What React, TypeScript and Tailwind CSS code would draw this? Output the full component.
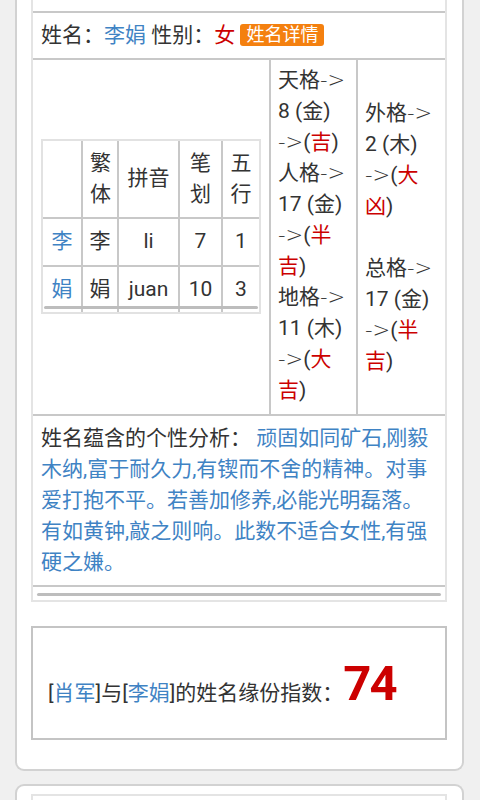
import React from "react";

const F = { fontFamily: '"Roboto", "Noto Sans CJK SC", sans-serif' };

const Blue = ({ children }: { children: React.ReactNode }) => (
  <span className="text-[#3f83c4]">{children}</span>
);
const Red = ({ children }: { children: React.ReactNode }) => (
  <span className="text-[#cc0000]">{children}</span>
);
const Ar = () => (
  <span style={{ fontFamily: '"DejaVu Sans", sans-serif' }} className="font-light">
    -&gt;
  </span>
);

function Line({ children }: { children: React.ReactNode }) {
  return <div>{children}</div>;
}

function SmallTable() {
  const cell = "border-2 border-[#c8c8c8] text-center align-middle px-[6px] py-[7px]";
  return (
    <div className="relative border-2 border-[#e2e2e2] w-[220px] mb-[22px]">
      <table className="border-collapse w-[216px] table-fixed">
        <colgroup>
          <col className="w-[39px]" />
          <col className="w-[36px]" />
          <col className="w-[61px]" />
          <col className="w-[43px]" />
          <col className="w-[37px]" />
        </colgroup>
        <tbody>
          <tr className="h-[77px]">
            <td className={cell + " border-t-0 border-l-0"}></td>
            <td className={cell + " border-t-0 px-[7px]"}>繁体</td>
            <td className={cell + " border-t-0"}>拼音</td>
            <td className={cell + " border-t-0"}>笔划</td>
            <td className={cell + " border-t-0 border-r-0"}>五行</td>
          </tr>
          <tr className="h-[48px]">
            <td className={cell + " border-l-0"}>
              <Blue>李</Blue>
            </td>
            <td className={cell}>李</td>
            <td className={cell}>li</td>
            <td className={cell}>7</td>
            <td className={cell + " border-r-0"}>1</td>
          </tr>
          <tr className="h-[46px]">
            <td className={cell + " border-l-0 border-b-0"}>
              <Blue>娟</Blue>
            </td>
            <td className={cell + " border-b-0"}>娟</td>
            <td className={cell + " border-b-0"}>juan</td>
            <td className={cell + " border-b-0"}>10</td>
            <td className={cell + " border-r-0 border-b-0"}>3</td>
          </tr>
        </tbody>
      </table>
      <div className="absolute left-[1px] right-[1px] bottom-[3px] h-[3px] rounded-full bg-[#bdbdbd]" />
    </div>
  );
}

export default function App() {
  const td = "border-2 border-[#c8c8c8] px-[7px] py-[7px] align-middle";
  return (
    <div
      className="w-[480px] min-h-[800px] bg-[#f0f0f0] text-[21px] leading-[31px] text-[#333333] overflow-hidden"
      style={F}
    >
      <div className="ml-[15px] w-[449px] bg-white border-2 border-t-0 border-[#d2d2d2] rounded-b-[9px] pl-[14px] pr-[15px] pb-[29px]">
        <div className="border-2 border-t-0 border-[#e4e4e4]">
          <table className="w-[412px] border-collapse table-fixed">
            <colgroup>
              <col className="w-[237px]" />
              <col className="w-[87px]" />
              <col className="w-[88px]" />
            </colgroup>
            <tbody>
              <tr>
                <td colSpan={3} className="border-b-2 border-[#c8c8c8] h-[12px] p-0"></td>
              </tr>
              <tr>
                <td colSpan={3} className={td + " border-l-0 border-r-0 pl-[8px] py-[6px]"}>
                  姓名：<Blue>李娟</Blue> 性别：<Red>女</Red>{" "}
                  <span className="inline-block align-[1px] bg-[#f4800f] text-white text-[18px] leading-[22px] px-[6px] rounded-[3px]">
                    姓名详情
                  </span>
                </td>
              </tr>
              <tr className="h-[356px]">
                <td className={td + " border-l-0 pl-[8px] py-0"}>
                  <SmallTable />
                </td>
                <td className={td + " pt-[3px] pb-[6px]"}>
                  <Line>
                    天格<Ar />
                  </Line>
                  <Line>8 (金)</Line>
                  <Line>
                    <Ar />(<Red>吉</Red>)
                  </Line>
                  <Line>
                    人格<Ar />
                  </Line>
                  <Line>17 (金)</Line>
                  <Line>
                    <Ar />(<Red>半</Red>
                  </Line>
                  <Line>
                    <Red>吉</Red>)
                  </Line>
                  <Line>
                    地格<Ar />
                  </Line>
                  <Line>11 (木)</Line>
                  <Line>
                    <Ar />(<Red>大</Red>
                  </Line>
                  <Line>
                    <Red>吉</Red>)
                  </Line>
                </td>
                <td className={td + " border-r-0 py-0"}>
                  <Line>
                    外格<Ar />
                  </Line>
                  <Line>2 (木)</Line>
                  <Line>
                    <Ar />(<Red>大</Red>
                  </Line>
                  <Line>
                    <Red>凶</Red>)
                  </Line>
                  <Line>&nbsp;</Line>
                  <Line>
                    总格<Ar />
                  </Line>
                  <Line>17 (金)</Line>
                  <Line>
                    <Ar />(<Red>半</Red>
                  </Line>
                  <Line>
                    <Red>吉</Red>)
                  </Line>
                </td>
              </tr>
              <tr>
                <td colSpan={3} className={td + " border-l-0 border-r-0 border-b-0 pl-[8px] pr-[8px]"}>
                  姓名蕴含的个性分析：{" "}
                  <Blue>
                    顽固如同矿石,刚毅木纳,富于耐久力,有锲而不舍的精神。对事爱打抱不平。若善加修养,必能光明磊落。有如黄钟,敲之则响。此数不适合女性,有强硬之嫌。
                  </Blue>
                </td>
              </tr>
            </tbody>
          </table>
          <div className="border-t-2 border-[#c8c8c8] pt-[6px] pb-[4px] px-[4px]">
            <div className="h-[3px] rounded-full bg-[#bdbdbd]" />
          </div>
        </div>

        <div className="mt-[24px] h-[114px] border-2 border-[#c4c4c4] flex items-center pl-[15px] pt-[2px]">
          <div className="flex items-baseline">
            <span>
              [<Blue>肖军</Blue>]与[<Blue>李娟</Blue>]的姓名缘份指数：
            </span>
            <span className="text-[#cc0000] font-bold text-[49px] leading-none tracking-[-2px]">74</span>
          </div>
        </div>
      </div>

      <div className="mt-[13px] ml-[15px] w-[449px] h-[40px] bg-white border-2 border-b-0 border-[#d2d2d2] rounded-t-[9px] pl-[14px] pr-[15px] pt-[8px]">
        <div className="h-full border-2 border-b-0 border-[#e4e4e4]" />
      </div>
    </div>
  );
}
